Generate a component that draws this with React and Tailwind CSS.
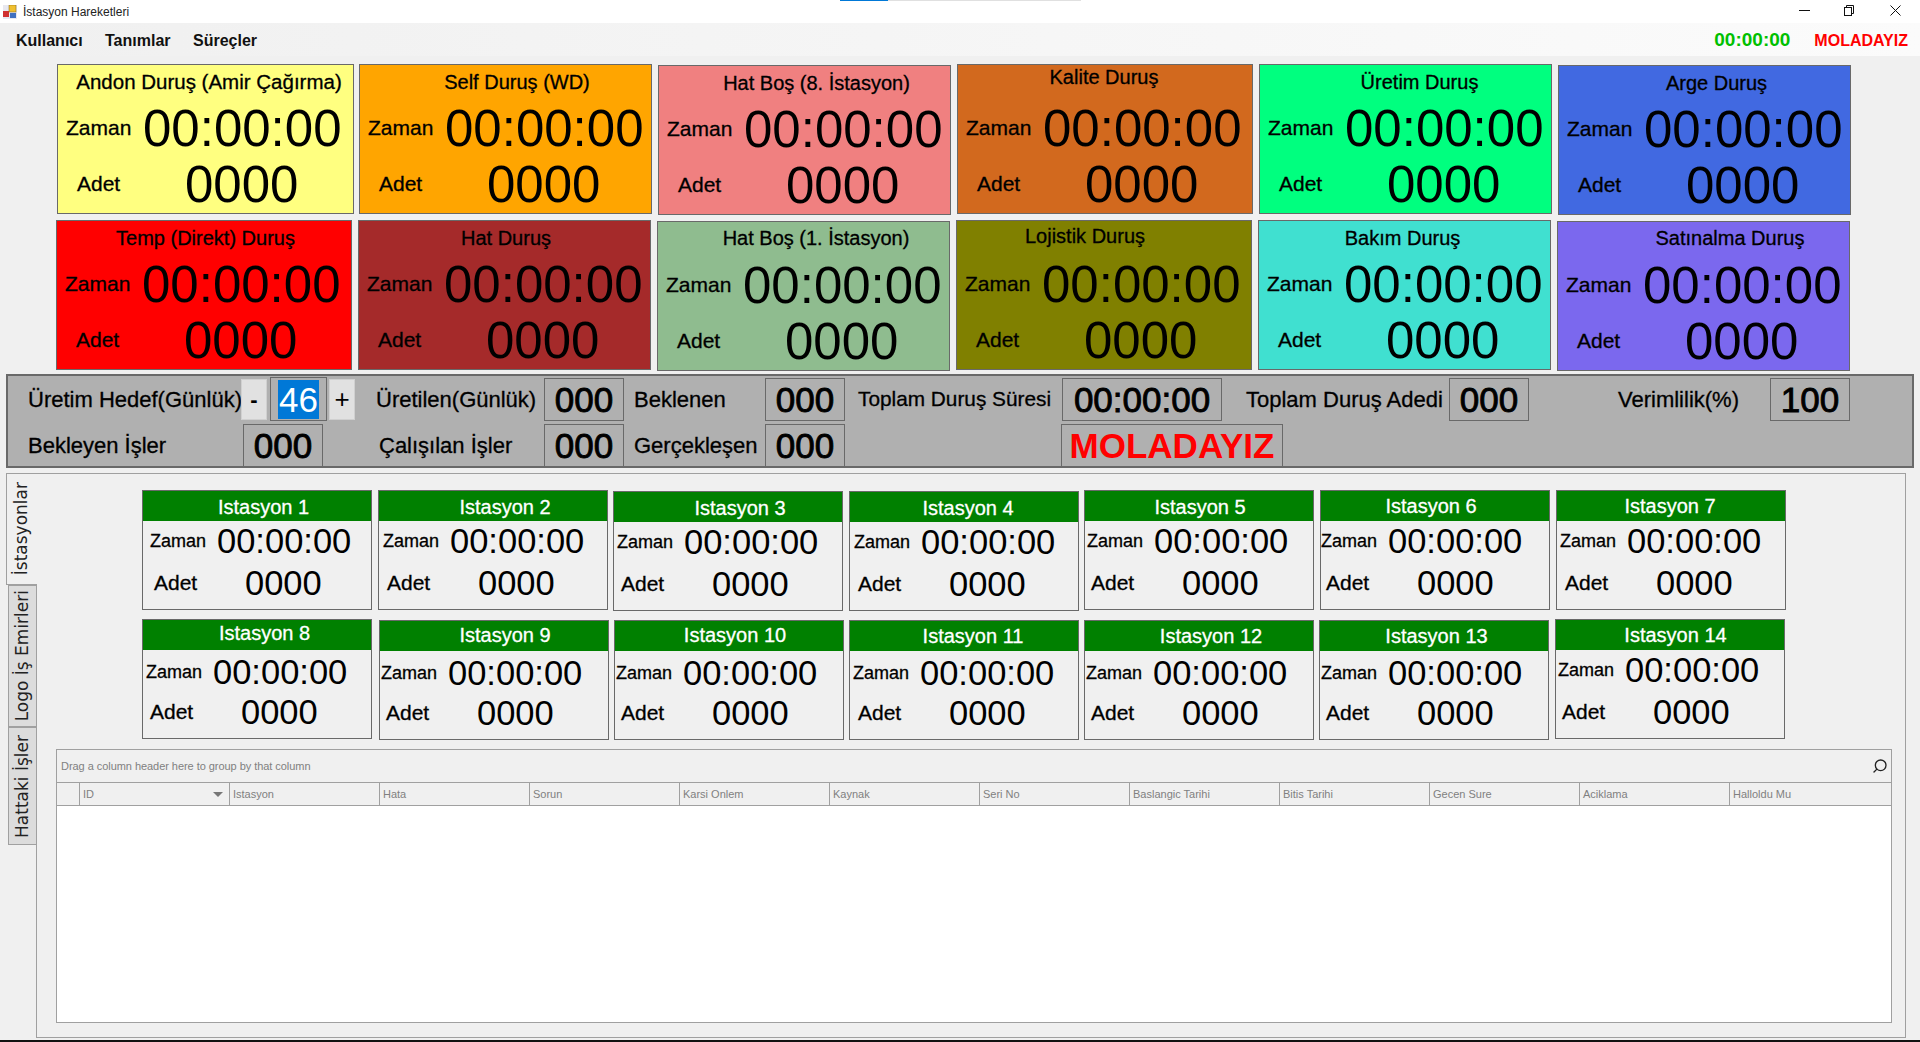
import React from "react";
import { Search } from "lucide-react";

const font = { fontFamily: '"Liberation Sans", Arial, sans-serif' };

// widths and nudges follow the original form, its controls are not on a strict grid
const topRow = [
  { title: "Andon Duruş (Amir Çağırma)", bg: "bg-[#ffff80]", box: "w-[297px] ml-0 mt-0", tc: "pl-[7px] pt-[5px] text-[20.5px]" },
  { title: "Self Duruş (WD)", bg: "bg-[#ffa500]", box: "w-[293px] ml-[5px] mt-0", tc: "pl-[23px] pt-[5px] text-[20px]" },
  { title: "Hat Boş (8. İstasyon)", bg: "bg-[#f08080]", box: "w-[293px] ml-[6px] mt-px", tc: "pl-[24px] pt-[5px] text-[20px]" },
  { title: "Kalite Duruş", bg: "bg-[#d2691e]", box: "w-[296px] ml-[6px] mt-0", tc: "pr-[2px] pt-0 text-[20px]" },
  { title: "Üretim Duruş", bg: "bg-[#00ff7f]", box: "w-[293px] ml-[6px] mt-0", tc: "pl-[28px] pt-[5px] text-[20px]" },
  { title: "Arge Duruş", bg: "bg-[#4169e1]", box: "w-[293px] ml-[6px] mt-px", tc: "pl-[24px] pt-[5px] text-[20px]" },
];

const bottomRow = [
  { title: "Temp (Direkt) Duruş", bg: "bg-[#ff0000]", box: "w-[296px] ml-[-1px] mt-0", tc: "pl-[3px] pt-[5px] text-[20px]" },
  { title: "Hat Duruş", bg: "bg-[#a52a2a]", box: "w-[293px] ml-[6px] mt-0", tc: "pl-[3px] pt-[5px] text-[20px]" },
  { title: "Hat Boş (1. İstasyon)", bg: "bg-[#8fbc8f]", box: "w-[293px] ml-[6px] mt-px", tc: "pl-[25px] pt-[4px] text-[20px]" },
  { title: "Lojistik Duruş", bg: "bg-[#808000]", box: "w-[296px] ml-[6px] mt-0", tc: "pr-[38px] pt-[3px] text-[20px]" },
  { title: "Bakım Duruş", bg: "bg-[#40e0d0]", box: "w-[293px] ml-[6px] mt-0", tc: "pr-[4px] pt-[5px] text-[20px]" },
  { title: "Satınalma Duruş", bg: "bg-[#7b68ee]", box: "w-[293px] ml-[6px] mt-px", tc: "pl-[53px] pt-[4px] text-[20px]" },
];

const stationsTop = [
  { no: 1, box: "ml-0 mt-0", head: "pl-[13px] leading-[32px]", zaman: "pl-[7px] pt-[2px]", adet: "pl-[10px]" },
  { no: 2, box: "ml-[6px] mt-0", head: "pl-[24px] leading-[32px]", zaman: "pl-[4px] pt-[2px]", adet: "pl-[7px]" },
  { no: 3, box: "ml-[5px] mt-px", head: "pl-[24px] leading-[32px]", zaman: "pl-[3px] pt-[2px]", adet: "pl-[6px]" },
  { no: 4, box: "ml-[6px] mt-px", head: "pl-[8px] leading-[32px]", zaman: "pl-[4px] pt-[2px]", adet: "pl-[7px]" },
  { no: 5, box: "ml-[5px] mt-0", head: "pl-[2px] leading-[32px]", zaman: "pl-[2px] pt-[2px]", adet: "pl-[5px]" },
  { no: 6, box: "ml-[6px] mt-0", head: "pr-[8px] leading-[30px]", zaman: "pl-0 pt-[2px]", adet: "pl-[4px]" },
  { no: 7, box: "ml-[6px] mt-0", head: "pr-[2px] leading-[30px]", zaman: "pl-[3px] pt-[2px]", adet: "pl-[7px]" },
];

const stationsBottom = [
  { no: 8, box: "ml-0 mt-0", head: "pl-[15px] leading-[26px]", zaman: "pl-[3px] pt-[6px]", adet: "pl-[6px]" },
  { no: 9, box: "ml-[7px] mt-px", head: "pl-[22px] leading-[28px]", zaman: "pl-px pt-[6px]", adet: "pl-[5px]" },
  { no: 10, box: "ml-[5px] mt-px", head: "pl-[12px] leading-[28px]", zaman: "pl-px pt-[6px]", adet: "pl-[5px]" },
  { no: 11, box: "ml-[5px] mt-px", head: "pl-[18px] leading-[30px]", zaman: "pl-[3px] pt-[6px]", adet: "pl-[7px]" },
  { no: 12, box: "ml-[5px] mt-px", head: "pl-[24px] leading-[30px]", zaman: "pl-px pt-[6px]", adet: "pl-[5px]" },
  { no: 13, box: "ml-[5px] mt-px", head: "pl-[5px] leading-[30px]", zaman: "pl-px pt-[6px]", adet: "pl-[5px]" },
  { no: 14, box: "ml-[6px] mt-0", head: "pl-[11px] leading-[30px]", zaman: "pl-[2px] pt-[2px]", adet: "pl-[5px]" },
];

const columns = ["ID", "Istasyon", "Hata", "Sorun", "Karsi Onlem", "Kaynak", "Seri No", "Baslangic Tarihi", "Bitis Tarihi", "Gecen Sure", "Aciklama", "Halloldu Mu"];

const DurusCard = ({ title, bg, box, tc }) => (
  <div className={`h-[150px] shrink-0 border border-[#696969] ${bg} ${box} flex flex-col text-black`}>
    <div className={`h-[29px] text-center leading-6 whitespace-nowrap [-webkit-text-stroke-width:0.3px] ${tc}`}>{title}</div>
    <div className="flex items-center pl-2 mt-[8px] h-[52px]">
      <span className="text-[21px] w-[77px] [-webkit-text-stroke-width:0.3px]">Zaman</span>
      <span className="text-[51px] leading-none">00:00:00</span>
    </div>
    <div className="flex items-center pl-[19px] mt-[5px] h-[50px]">
      <span className="text-[21px] w-[108px] [-webkit-text-stroke-width:0.3px]">Adet</span>
      <span className="text-[51px] leading-none">0000</span>
    </div>
  </div>
);

const Box = ({ children, className = "" }) => (
  <div className={`h-[43px] shrink-0 border border-[#696969] flex items-center justify-center leading-none ${className}`}>
    {children}
  </div>
);

const Label = ({ children, className = "" }) => (
  <span className={`shrink-0 whitespace-nowrap [-webkit-text-stroke-width:0.3px] ${className}`}>{children}</span>
);

const num = "text-[35px] [-webkit-text-stroke-width:0.9px]";

const IstasyonCard = ({ no, box, head, zaman, adet }) => (
  <div className={`w-[230px] h-[120px] shrink-0 border border-[#696969] bg-[#f0f0f0] text-black ${box}`}>
    <div className={`h-[30px] bg-[#008000] text-white text-center text-[20px] [-webkit-text-stroke-width:0.3px] ${head}`}>Istasyon {no}</div>
    <div className={`flex items-center h-[38px] ${zaman}`}>
      <span className="text-[18px] w-[67px] shrink-0 [-webkit-text-stroke-width:0.3px]">Zaman</span>
      <span className="text-[34.5px] leading-none">00:00:00</span>
    </div>
    <div className={`flex items-center h-[48px] ${adet}`}>
      <span className="text-[21px] w-[92px] shrink-0 pl-px [-webkit-text-stroke-width:0.3px]">Adet</span>
      <span className="text-[34.5px] leading-none">0000</span>
    </div>
  </div>
);

const App = () => (
  <div className="w-[1920px] h-[1042px] overflow-hidden bg-[#f0f0f0] flex flex-col" style={font}>
    {/* title bar */}
    <div className="h-[23px] bg-white flex items-center relative shrink-0">
      <svg width="14" height="14" viewBox="0 0 14 14" className="ml-[3px]">
        <rect x="0" y="0" width="14" height="14" fill="#e8e8f0" />
        <rect x="0" y="6" width="6" height="6" fill="#d03030" />
        <rect x="6" y="0" width="7" height="7" fill="#f0c030" stroke="#806010" strokeWidth="0.5" />
        <rect x="7" y="8" width="6" height="5" fill="#4070c0" />
      </svg>
      <span className="ml-[6px] text-[12px] text-[#222]">İstasyon Hareketleri</span>
      <div className="absolute left-[840px] top-0 w-[48px] h-px bg-[#0078d7]" />
      <div className="absolute left-[888px] top-0 w-[193px] h-px bg-[#e0e0e0]" />
      <div className="absolute left-[1799px] top-[10px] w-[11px] h-px bg-[#111]" />
      <svg className="absolute left-[1844px] top-[5px]" width="11" height="11" viewBox="0 0 11 11" fill="none" stroke="#111">
        <rect x="0.5" y="2.5" width="7" height="8" />
        <path d="M2.5 2.5v-2h7v8h-2" />
      </svg>
      <svg className="absolute left-[1890px] top-[5px]" width="11" height="11" viewBox="0 0 11 11" fill="none" stroke="#111">
        <path d="M0.5 0.5l10 10M10.5 0.5l-10 10" />
      </svg>
    </div>

    {/* menu */}
    <div className="h-[33px] shrink-0 flex items-center pt-[2px] bg-gradient-to-r from-[#f0f0f0] to-[#fbfbfb] font-bold text-[16px] text-[#111]">
      <span className="ml-4 w-[68px]">Kullanıcı</span>
      <span className="ml-[21px] w-[67px]">Tanımlar</span>
      <span className="ml-[21px]">Süreçler</span>
      <span className="ml-auto text-[#00c000] text-[19px]">00:00:00</span>
      <span className="ml-6 mr-3 text-[#ff0000] text-[16px]">MOLADAYIZ</span>
    </div>

    {/* durus cards */}
    <div className="flex items-start ml-[57px] mt-[8px] h-[151px]">
      {topRow.map((c) => <DurusCard key={c.title} {...c} />)}
    </div>
    <div className="flex items-start ml-[57px] mt-[5px] h-[151px]">
      {bottomRow.map((c) => <DurusCard key={c.title} {...c} />)}
    </div>

    {/* summary panel */}
    <div className="mx-[6px] mt-[3px] h-[94px] shrink-0 border-2 border-[#696969] bg-[#b0b0b0] text-[22px] text-black flex flex-col gap-[3px] pt-[1px]">
      <div className="flex items-center h-[44px]">
        <Label className="ml-[20px] w-[213px]">Üretim Hedef(Günlük)</Label>
        <div className="w-[26px] h-[41px] shrink-0 bg-[#e1e1e1] border border-[#d0d0d0] flex items-center justify-center font-bold">-</div>
        <div className="ml-[3px] w-[57px] h-[44px] shrink-0 border border-[#696969] flex items-center justify-center text-[35px] text-white leading-none">
          <span className="bg-[#0078d7] px-px leading-[39px]">46</span>
        </div>
        <div className="ml-[2px] w-[26px] h-[41px] shrink-0 bg-[#e1e1e1] border border-[#d0d0d0] flex items-center justify-center text-[26px] leading-none">+</div>
        <Label className="ml-[21px] w-[168px]">Üretilen(Günlük)</Label>
        <Box className={`w-[80px] ${num}`}>000</Box>
        <Label className="ml-[10px] w-[131px]">Beklenen</Label>
        <Box className={`w-[80px] ${num}`}>000</Box>
        <Label className="ml-[13px] w-[204px] text-[20.8px]">Toplam Duruş Süresi</Label>
        <Box className={`w-[160px] ${num}`}>00:00:00</Box>
        <Label className="ml-[24px] w-[203px]">Toplam Duruş Adedi</Label>
        <Box className={`w-[80px] ${num}`}>000</Box>
        <Label className="ml-[89px] w-[152px]">Verimlilik(%)</Label>
        <Box className={`w-[80px] ${num}`}>100</Box>
      </div>
      <div className="flex items-center h-[43px]">
        <Label className="ml-[20px] w-[215px]">Bekleyen İşler</Label>
        <Box className={`w-[80px] ${num}`}>000</Box>
        <Label className="ml-[56px] w-[165px]">Çalışılan İşler</Label>
        <Box className={`w-[80px] ${num}`}>000</Box>
        <Label className="ml-[10px] w-[131px]">Gerçekleşen</Label>
        <Box className={`w-[80px] ${num}`}>000</Box>
        <span className="w-[216px] shrink-0" />
        <Box className="w-[222px] text-[35px] font-bold text-[#ff0000]">MOLADAYIZ</Box>
      </div>
    </div>

    {/* tab control */}
    <div className="mt-[5px] flex-1 min-h-0 flex">
      <div className="w-[30px] ml-[6px] shrink-0 flex flex-col text-[#222] text-[17px]" style={{ fontFamily: '"DejaVu Sans", sans-serif' }}>
        <div className="relative z-10 w-[31px] h-[112px] flex items-center justify-center bg-[#f0f0f0] border-l border-t border-b border-[#a0a0a0]">
          <span className="[writing-mode:vertical-rl] rotate-180 whitespace-nowrap">İstasyonlar</span>
        </div>
        <div className="ml-[2px] w-[29px] h-[142px] flex items-center justify-center bg-[#dcdcdc] border border-[#a0a0a0]">
          <span className="[writing-mode:vertical-rl] rotate-180 whitespace-nowrap">Logo İş Emirleri</span>
        </div>
        <div className="ml-[2px] w-[29px] h-[118px] flex items-center justify-center bg-[#dcdcdc] border border-[#a0a0a0]">
          <span className="[writing-mode:vertical-rl] rotate-180 whitespace-nowrap">Hattaki İşler</span>
        </div>
      </div>
      <div className="flex-1 mr-[14px] mb-[2px] border border-[#a0a0a0] flex flex-col">
        <div className="flex items-start ml-[105px] mt-[16px] h-[121px] shrink-0">
          {stationsTop.map((s) => <IstasyonCard key={s.no} {...s} />)}
        </div>
        <div className="flex items-start ml-[105px] mt-[8px] h-[121px] shrink-0">
          {stationsBottom.map((s) => <IstasyonCard key={s.no} {...s} />)}
        </div>

        {/* grid */}
        <div className="ml-[19px] mr-[13px] mt-[9px] mb-[14px] flex-1 border border-[#a0a0a0] flex flex-col text-[#808080] text-[11px]">
          <div className="h-[32px] flex items-center pl-[4px] justify-between pr-[3px] shrink-0">
            <span className="tracking-[-0.05px]">Drag a column header here to group by that column</span>
            <Search className="text-[#222] -scale-x-100" size={16} strokeWidth={2} />
          </div>
          <div className="h-[24px] flex border-t border-b border-[#a0a0a0] shrink-0">
            <div className="w-[23px] border-r border-[#a0a0a0]" />
            {columns.map((c, i) => (
              <div key={c} className={`pl-[3px] flex items-center ${i < 11 ? "w-[150px] border-r border-[#a0a0a0]" : "flex-1"} ${i === 0 ? "justify-between pr-[6px]" : ""}`}>
                {c}
                {i === 0 && <span className="w-0 h-0 border-l-[5px] border-r-[5px] border-t-[5px] border-l-transparent border-r-transparent border-t-[#777]" />}
              </div>
            ))}
          </div>
          <div className="flex-1 bg-white" />
        </div>
      </div>
    </div>
    <div className="h-[2px] bg-[#111] shrink-0" />
  </div>
);

export default App;
